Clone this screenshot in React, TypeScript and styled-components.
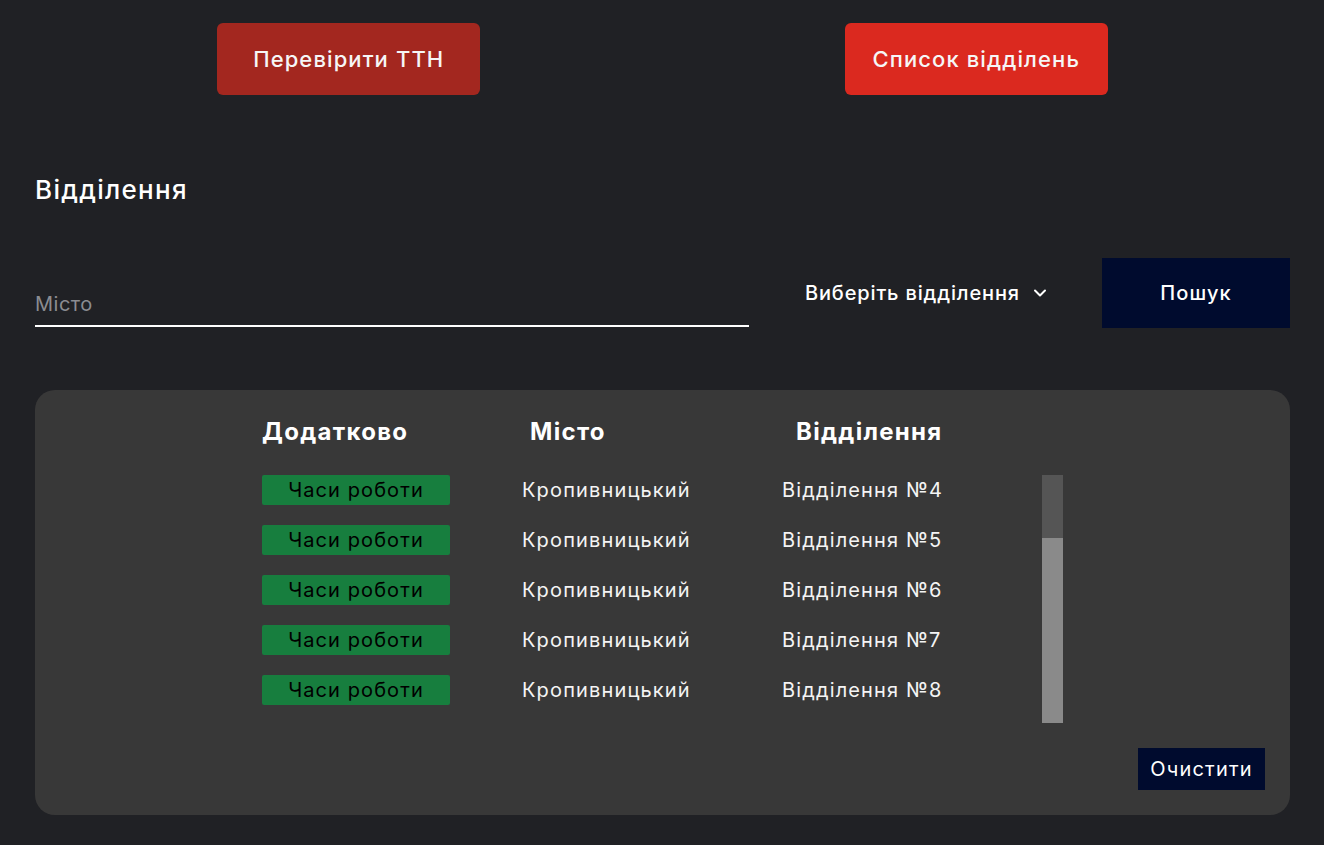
import React from 'react'
import styled, { createGlobalStyle } from 'styled-components'
import { ChevronDown } from 'lucide-react'

const GlobalStyle = createGlobalStyle`
    html, body {
        margin: 0;
        padding: 0;
        background: #202125;
    }
    body {
        font-family: Inter, "DejaVu Sans", sans-serif;
        color: #ffffff;
    }
    * {
        box-sizing: border-box;
    }
`

const Page = styled.div`
    min-height: 845px;
    padding: 23px 34px 30px 35px;
`

const TopBar = styled.div`
    display: grid;
    grid-template-columns: 1fr 1fr;
    justify-items: center;
`

const TopButton = styled.button<{ $active?: boolean }>`
    width: 263px;
    height: 72px;
    border: none;
    border-radius: 6px;
    background: ${({ $active }) => ($active ? '#db291f' : '#a3271f')};
    color: #f6f6f6;
    font-family: inherit;
    font-size: 22px;
    font-weight: 500;
    letter-spacing: 1.1px;
    cursor: pointer;
`

const Heading = styled.h2`
    margin: 80px 0 0;
    font-size: 26px;
    line-height: 30px;
    font-weight: 500;
    letter-spacing: 1.3px;
`

const SearchRow = styled.div`
    display: flex;
    align-items: center;
    height: 70px;
    margin-top: 53px;
`

const CityInput = styled.input`
    align-self: flex-end;
    width: 714px;
    height: 44px;
    margin-bottom: 1px;
    padding: 0;
    border: none;
    border-bottom: 2px solid #ffffff;
    background: transparent;
    color: #ffffff;
    font-family: inherit;
    font-size: 20px;
    letter-spacing: 0.5px;
    outline: none;

    &::placeholder {
        color: #8b8c91;
    }
`

const Select = styled.div`
    display: flex;
    align-items: center;
    gap: 10px;
    margin-left: 56px;
    font-size: 20px;
    font-weight: 500;
    letter-spacing: 0.85px;
    cursor: pointer;
`

const NavyButton = styled.button<{ $small?: boolean }>`
    border: none;
    background: #000b2e;
    color: #ffffff;
    font-family: inherit;
    font-size: 20px;
    cursor: pointer;
    width: ${({ $small }) => ($small ? '127px' : '188px')};
    height: ${({ $small }) => ($small ? '42px' : '70px')};
    font-weight: ${({ $small }) => ($small ? 400 : 500)};
    letter-spacing: ${({ $small }) => ($small ? '1.2px' : '1.1px')};
`

const SearchButton = styled(NavyButton)`
    margin-left: auto;
`

const Panel = styled.section`
    margin-top: 62px;
    height: 425px;
    padding: 27px 25px 25px;
    border-radius: 20px;
    background: #383838;
    display: flex;
    flex-direction: column;
`

const Table = styled.div`
    width: 801px;
    margin: 0 auto;
`

const HeadRow = styled.div`
    display: grid;
    grid-template-columns: repeat(3, 260px);
`

const HeadCell = styled.div<{ $shift: number }>`
    padding-left: ${({ $shift }) => $shift}px;
    font-size: 24px;
    line-height: 30px;
    font-weight: 700;
    letter-spacing: 1.3px;
`

const Body = styled.div`
    display: flex;
    margin-top: 28px;
    height: 248px;
`

const List = styled.div`
    width: 780px;
    display: flex;
    flex-direction: column;
    gap: 20px;
    overflow: hidden;
`

const Row = styled.div`
    display: grid;
    grid-template-columns: repeat(3, 260px);
    align-items: center;
    height: 30px;
    flex-shrink: 0;
`

const Badge = styled.span`
    width: 188px;
    height: 30px;
    border-radius: 2px;
    background: #177e3e;
    color: #000000;
    font-size: 20px;
    line-height: 30px;
    text-align: center;
    letter-spacing: 1.1px;
`

const Cell = styled.span`
    font-size: 20px;
    line-height: 30px;
    letter-spacing: 1.15px;
    color: #f4f4f4;
`

const Track = styled.div`
    width: 21px;
    display: flex;
    flex-direction: column;
    background: #555555;
`

const Thumb = styled.div`
    margin-top: 63px;
    flex: 1;
    background: #8a8a8a;
`

const Footer = styled.div`
    display: flex;
    justify-content: flex-end;
    margin-top: 25px;
`

const rows = [4, 5, 6, 7, 8]

export default function App() {
    return (
        <Page>
            <GlobalStyle />
            <TopBar>
                <TopButton>Перевірити ТТН</TopButton>
                <TopButton $active>Список відділень</TopButton>
            </TopBar>

            <Heading>Відділення</Heading>

            <SearchRow>
                <CityInput placeholder="Місто" />
                <Select>
                    Виберіть відділення
                    <ChevronDown size={20} strokeWidth={2.4} />
                </Select>
                <SearchButton>Пошук</SearchButton>
            </SearchRow>

            <Panel>
                <Table>
                    <HeadRow>
                        <HeadCell $shift={0}>Додатково</HeadCell>
                        <HeadCell $shift={8}>Місто</HeadCell>
                        <HeadCell $shift={14}>Відділення</HeadCell>
                    </HeadRow>
                    <Body>
                        <List>
                            {rows.map((n) => (
                                <Row key={n}>
                                    <Badge>Часи роботи</Badge>
                                    <Cell>Кропивницький</Cell>
                                    <Cell>Відділення №{n}</Cell>
                                </Row>
                            ))}
                        </List>
                        <Track>
                            <Thumb />
                        </Track>
                    </Body>
                </Table>
                <Footer>
                    <NavyButton $small>Очистити</NavyButton>
                </Footer>
            </Panel>
        </Page>
    )
}
